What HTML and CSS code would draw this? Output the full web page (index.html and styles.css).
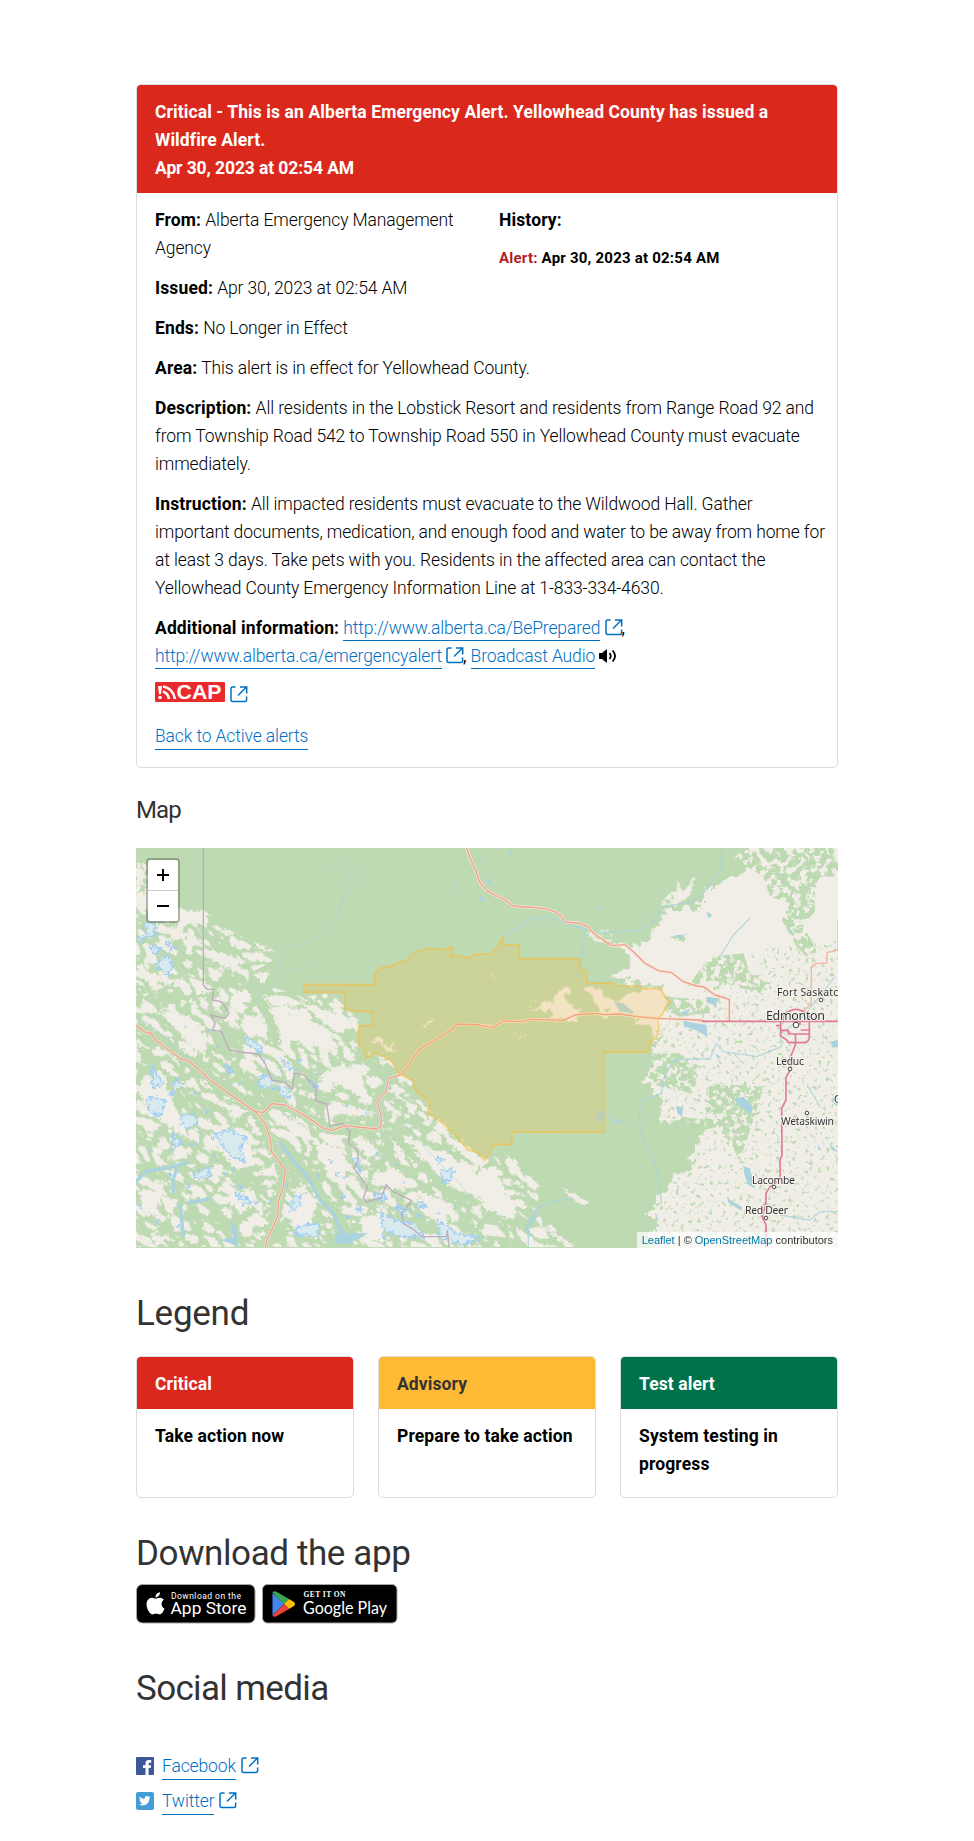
FILE: index.html
```html
<!DOCTYPE html>
<html lang="en">
<head>
<meta charset="utf-8">
<title>Alberta Emergency Alert</title>
<link rel="stylesheet" href="styles.css">
</head>
<body>
<svg width="0" height="0" class="defs" aria-hidden="true">
  <symbol id="ext" viewBox="0 0 18 17"><g fill="none" stroke="#0070c4" stroke-width="1.5"><path d="M5.5 1H2.6Q1 1 1 2.6V14Q1 15.5 2.6 15.5H15Q16.6 15.5 16.6 14V10.5"/><path d="M8 9.5 16 1.5M10 1H16.7V7.5"/></g></symbol>
</svg>
<main class="page">
  <section class="card alert">
    <h2 class="card-head critical head-text">Critical - This is an Alberta Emergency Alert. Yellowhead County has issued a<br>Wildfire Alert.<br><span class="stamp">Apr 30, 2023 at 02:54 AM</span></h2>
    <div class="card-body">
      <div class="split">
        <div>
          <p><b>From:</b> Alberta Emergency Management<br>Agency</p>
          <p><b>Issued:</b> Apr 30, 2023 at 02:54 AM</p>
          <p><b>Ends:</b> No Longer in Effect</p>
        </div>
        <div class="history">
          <b>History:</b>
          <div class="history-item"><span>Alert:</span> Apr 30, 2023 at 02:54 AM</div>
        </div>
      </div>
      <p><b>Area:</b> This alert is in effect for Yellowhead County.</p>
      <p><b>Description:</b> All residents in the Lobstick Resort and residents from Range Road 92 and<br>from Township Road 542 to Township Road 550 in Yellowhead County must evacuate<br>immediately.</p>
      <p><b>Instruction:</b> All impacted residents must evacuate to the Wildwood Hall. Gather<br>important documents, medication, and enough food and water to be away from home for<br>at least 3 days. Take pets with you. Residents in the affected area can contact the<br>Yellowhead County Emergency Information Line at 1-833-334-4630.</p>
      <p><b>Additional information:</b> <a href="#">http://www.alberta.ca/BePrepared</a> <svg class="ext"><use href="#ext"/></svg><span class="comma">,</span><br><a href="#">http://www.alberta.ca/emergencyalert</a> <svg class="ext"><use href="#ext"/></svg><span class="comma">,</span> <a href="#">Broadcast Audio</a> <svg class="sound" viewBox="0 0 18 14"><path d="M0 4H3L8 0V14L3 10H0Z"/><path d="M10.5 4Q13 7 10.5 10M13.6 1.5Q18.6 7 13.6 12.5" fill="none" stroke="#000" stroke-width="1.8"/></svg></p>
      <div class="cap-row">
        <svg class="cap" viewBox="0 0 70 20"><rect width="70" height="20" rx="1" fill="#eb2a2e"/><path d="M3 4H7L6 12H4Z" fill="#fff"/><circle cx="5" cy="15.5" r="1.8" fill="#fff"/><path d="M8 4.5Q18 6 20 17M8 9.5Q13 11 14 17" stroke="#fff" stroke-width="2.6" fill="none"/><text x="21.5" y="17" textLength="45" lengthAdjust="spacingAndGlyphs">CAP</text></svg>
        <svg class="ext"><use href="#ext"/></svg>
      </div>
      <a href="#" class="back">Back to Active alerts</a>
    </div>
  </section>

  <h3 class="map-title">Map</h3>
  <section class="map">
    <svg class="tiles" viewBox="0 0 702 400" width="702" height="400">
      <defs>
        <filter id="rough" x="-10%" y="-10%" width="120%" height="120%"><feTurbulence type="fractalNoise" baseFrequency=".035" numOctaves="4" seed="4"/><feDisplacementMap in="SourceGraphic" scale="62" xChannelSelector="R" yChannelSelector="G"/></filter>
        <filter id="wobble" x="-10%" y="-10%" width="120%" height="120%"><feTurbulence type="fractalNoise" baseFrequency=".09" numOctaves="3" seed="9"/><feDisplacementMap in="SourceGraphic" scale="26" xChannelSelector="R" yChannelSelector="G"/></filter>
        <filter id="ridges" x="0" y="0" width="100%" height="100%" color-interpolation-filters="sRGB"><feTurbulence type="turbulence" baseFrequency=".017 .028" numOctaves="5" seed="12"/><feColorMatrix values="0 0 0 0 .945  0 0 0 0 .933  0 0 0 0 .906  20 0 0 0 -6.6"/><feComposite in2="SourceGraphic" operator="in"/></filter>
        <filter id="groves" x="0" y="0" width="100%" height="100%" color-interpolation-filters="sRGB"><feTurbulence type="fractalNoise" baseFrequency=".08" numOctaves="4" seed="21"/><feColorMatrix values="0 0 0 0 .745  0 0 0 0 .855  0 0 0 0 .70  8 0 0 0 -4.8"/><feComposite in2="SourceGraphic" operator="in"/></filter>
        <filter id="dense" x="0" y="0" width="100%" height="100%" color-interpolation-filters="sRGB"><feTurbulence type="fractalNoise" baseFrequency=".05" numOctaves="5" seed="5"/><feColorMatrix values="0 0 0 0 .745  0 0 0 0 .855  0 0 0 0 .70  14 0 0 0 -6"/><feComposite in2="SourceGraphic" operator="in"/></filter>
        <clipPath id="rockies"><path d="M18 60 50 75 60 170 140 200 215 205 300 270 370 310 460 345 360 400 350 440 420 440 520 470 600 460 690 540 690 620 760 640 860 740 900 790 1060 950 1150 950 1230 1040 1220 1110 1330 1222H18Z"/></clipPath>
      </defs>
      <rect width="702" height="400" fill="#bedab2"/>
      <g transform="translate(-6 -8) scale(.33333)">
        <g clip-path="url(#rockies)"><g transform="rotate(36)"><rect x="0" y="-820" width="1850" height="1850" filter="url(#ridges)"/></g></g>
        <g fill="#f1eee7" filter="url(#wobble)">
          <path d="M20 70 45 90 30 150 50 190 18 210ZM170 215 215 210 240 250 190 250ZM110 260 190 290 130 300ZM260 260 300 285 270 280ZM370 305 460 345 380 325ZM230 325 360 365 290 385 230 350ZM30 390 200 440 90 430ZM370 400 420 395 400 430ZM310 450 350 460 330 510 300 500ZM400 465 470 470 480 500 420 490ZM440 520 520 530 600 570 620 640 540 610 440 600ZM500 480 640 530 700 550 620 580ZM320 560 400 525 415 600 380 590ZM85 510 180 530 240 600 200 640 130 560ZM640 670 700 720 720 790 640 740 560 720 600 690ZM690 830 740 820 600 780 620 820ZM20 740 80 700 130 790 180 900 120 860 60 820ZM240 850 350 880 370 960 320 990 260 920ZM780 870 900 920 1040 1000 1080 1090 960 1040 860 930ZM700 890 750 940 710 960ZM430 810 530 860 560 910 480 880ZM560 900 640 930 650 1060 590 1000ZM770 730 900 820 860 790ZM900 840 1020 930 1080 1010 960 910ZM30 1050 100 1050 80 1120 40 1130ZM740 1010 800 980 850 1040 780 1050ZM860 1050 960 1090 950 1160 880 1120ZM500 1040 560 1080 540 1180 480 1140ZM280 1020 380 1100 300 1090ZM690 1130 760 1120 760 1200 700 1200ZM60 1180 120 1190 80 1220Z"/>
          <path transform="translate(1050 0)" d="M0 980 50 1000 80 1060 110 1100 100 1140 20 1110-10 1040ZM70 930 140 1020 130 1030ZM240 1040 330 1090 300 1095ZM170 1145 280 1215 260 1218Z"/>
        </g>
        <g fill="none" stroke="#bedab2" stroke-linejoin="round" filter="url(#wobble)">
          <path stroke-width="36" d="M18 555 80 590 170 660 260 730 380 810 420 900 465 1000 440 1120 405 1222"/>
          <path stroke-width="26" d="M380 815 440 790 530 830 610 870 740 865 755 800 740 780 800 700M450 340 440 400 380 470 430 560 440 620M460 910 540 1010 620 1130 660 1222M780 870 880 980 950 1050 1030 1080M760 870 790 970 860 1010M700 540 690 640 770 720"/>
          <path stroke-width="16" d="M18 440 120 480 270 460M20 620 180 770 300 820M230 640 340 710 440 790M20 1000 110 980 250 1000M150 1090 240 1080 300 1160M820 730 960 850 1050 940"/>
        </g>
        <g fill="#d9eaee" stroke="#9fcdf4" stroke-width="5" filter="url(#wobble)">
          <path d="M45 250 75 250 75 285 50 290ZM22 290 45 288 40 305ZM60 320 95 325 75 345ZM110 310 135 320 120 328ZM80 375 110 345 130 380 110 405ZM345 590 395 620 390 640 350 610ZM455 660 500 690 465 685ZM390 710 425 710 430 745 385 740ZM445 735 475 745 475 775 450 760ZM50 770 105 780 95 825 60 820ZM65 680 100 730 70 745ZM140 720 155 740 120 765ZM150 830 190 820 205 850 165 870ZM255 880 290 870 350 890 330 930 345 965 300 950ZM190 1000 240 980 240 1015 200 1015ZM320 1060 365 1085 340 1095ZM130 880 155 910 130 920ZM490 1070 515 1065 510 1100 480 1115ZM500 1160 570 1150 560 1190 500 1185ZM535 715 560 740 540 735ZM665 950 690 960 690 995ZM750 1110 790 1140 850 1150 880 1190 810 1190 760 1165ZM920 1140 980 1180 1050 1190 1000 1215 930 1190ZM930 990 970 990 960 1020 940 1025ZM920 950 940 955 925 970ZM800 1100 835 1110 820 1130ZM685 1100 695 1115 680 1115ZM290 680 305 690 300 700ZM735 1060 760 1060 770 1080 730 1075ZM870 1080 890 1100 860 1100Z"/>
        </g>
        <g fill="none" stroke="#9fcdf4" stroke-width="8" stroke-dasharray="8 58" filter="url(#wobble)"><path d="M120 1000 180 1040 260 980 330 1040 400 1110 470 1030 530 1060 600 960 650 1020 720 940 790 960 840 1060 780 1090 900 1140 960 1090 1020 1140M190 760 240 820 180 900 240 940 340 1010M400 660 440 700 510 660 600 740 650 800 720 820M30 1100 100 1160 160 1160M620 1000 660 1140 690 1180 800 1200M160 560 240 570 300 690 340 740M50 930 130 930 260 890"/></g>
        <g fill="none" stroke="#aad3df" stroke-linecap="round" stroke-linejoin="round">
          <path stroke-width="10" d="M18 1025 50 993 120 983 170 968M130 1055 128 1020 140 990M150 1095 160 1185M175 1088 235 1077M450 908 500 975 530 1005 570 1080 610 1120 640 1190"/>
          <path stroke-width="2.5" opacity=".7" d="M630 60 660 75 655 120 620 240 540 310 490 315 455 345 448 400 430 440 385 465 390 510 415 550M660 75 690 100 660 150 640 155 630 230M450 400 530 380M18 525 80 570 160 650 240 715M820 850 900 940 980 1020 1030 1080M770 700 755 800 760 870"/>
          <path fill="#aad3df" stroke="none" d="M300 1145 320 1160 325 1222 300 1210 270 1200 310 1190ZM630 1160 650 1180 715 1180 655 1212 610 1210ZM593 85 600 82 600 100ZM962 120 982 148 975 148ZM1045 45 1055 60 1048 62ZM1050 165 1068 184 1050 180Z"/>
        </g>
        <g fill="none" stroke="#bcadbb" stroke-width="4" stroke-linejoin="round">
          <path d="M220 24V436L232 448H250L247 480 275 485 297 520 285 535 242 525 255 550 248 570 275 575 296 628 330 636 385 642 405 670 425 720 460 725 488 748 492 700 520 704 560 745 556 782 590 792 600 858 640 850 660 875 655 910 682 930 685 960 672 985 712 1040 700 1075 710 1086 755 1072 768 1034 790 1055 845 1082 815 1120 820 1150 850 1168 875 1190 950 1190 952 1172 958 1222"/>
        </g>
        <g fill="none" stroke-linejoin="round">
          <path stroke="#f6e5d8" stroke-width="8" d="M18 557 50 580 60 576 80 603 150 655 180 665 240 720 340 790 375 815 405 850 422 900 424 935 466 990 460 1040 445 1085 443 1130 410 1200 406 1222M375 815 400 817 425 791 465 795 530 830 575 862 605 872 645 857 740 867 752 860 754 830 741 785 768 755 775 715 815 703 868 628 965 570 980 552 1060 555 1085 559"/>
          <path class="hw-core" d="M18 557 50 580 60 576 80 603 150 655 180 665 240 720 340 790 375 815 405 850 422 900 424 935 466 990 460 1040 445 1085 443 1130 410 1200 406 1222M375 815 400 817 425 791 465 795 530 830 575 862 605 872 645 857 740 867 752 860 754 830 741 785 768 755 775 715 815 703 868 628 965 570 980 552 1060 555 1085 559"/>
        </g>
      </g>
      <g transform="translate(344 -8) scale(.33333)">
        <path filter="url(#rough)" fill="#f1eee7" d="M750 0 800 90 740 120 670 150 660 200 560 210 510 290 470 320 400 300 450 340 440 380 400 410 450 430 545 440 570 480 545 540 540 600 510 640 500 740 540 750 540 850 610 840 670 860 640 930 640 970 600 1000 570 1030 530 1090 500 1120 530 1150 510 1180 560 1270H1180V0Z"/>
        <path filter="url(#rough)" fill="#f1eee7" d="M540 190 600 140 650 120 640 160 590 190ZM320 280 400 290 390 310 340 300ZM130 500 220 480 260 440 265 480 300 520 290 550 250 530 160 500ZM320 440 350 430 370 470 430 480 440 460 490 450 550 450 560 500 530 600 510 560 440 525 360 520ZM35 400H50L45 415ZM115 590 140 595 120 600ZM-165 555-135 530-145 560ZM-290 600-250 640-340 600Z"/>
        <g filter="url(#dense)"><path d="M740 10 1074 10V110H1020L1005 150V230L960 240 1010 330 1000 370 950 320 905 240 930 190 870 170 850 110 770 60ZM690 350 790 340 810 400 860 430 840 460 700 420 620 440ZM560 470 680 480 690 520 600 530 550 510ZM570 290 625 280 610 310ZM490 640 600 640 660 680 640 760 540 740 490 700ZM690 730 850 740 830 810 780 960 720 860 670 870ZM600 830 690 840 650 920 590 900Z"/></g>
        <path filter="url(#groves)" d="M490 590 700 420 840 330 1074 300V1222H500L560 980 660 860 530 850 520 730Z"/>
        <g fill="#aad3df">
          <path d="M680 470 715 475 708 497 680 487ZM610 543 680 555 682 592 650 570 612 560ZM762 775 790 770 818 800 815 822 775 795ZM790 978 810 985 825 1045 805 1035 792 1000ZM742 1075 785 1100 785 1112 745 1088ZM588 797 610 805 605 830 592 820ZM1050 605 1074 600V622H1058ZM1052 780 1070 765V798ZM680 215 697 225 685 235ZM595 520 630 506 620 525ZM585 285 612 285 600 298ZM925 260 937 275 930 277ZM22 110 40 135 25 130ZM82 30 98 38 90 48ZM0 170 15 182 0 180ZM350 205 365 198 358 212ZM403 838 430 848 405 850ZM1013 912 1024 930 1015 930ZM1048 910 1074 935 1055 930ZM795 440 802 460 797 460ZM708 640 720 650 710 654ZM527 1120 535 1140 527 1138ZM1023 720 1040 738ZM885 385 897 390Z"/>
          <path d="M360 810 372 815 368 850 345 835ZM402 485 430 490 465 520 420 515Z" opacity=".9"/>
        </g>
        <g fill="none" stroke="#aad3df" stroke-width="4" opacity=".8" stroke-linejoin="round">
          <path d="M725 24 722 90 680 150 640 185 550 200 520 245 480 270 350 280M320 270 200 230 150 240 70 290M315 280 300 390M905 620 830 650 730 635 710 610 690 655 580 660 550 720 545 760 480 785 478 850 495 920 520 945 535 1020 545 1090M370 815 420 850M905 620 900 580 960 540 1010 480 1065 410M810 235 760 285 720 350M985 740 1020 800M165 1110 145 1150 145 1222M165 1110 210 1085 280 1075M1074 1115 1020 1115 990 1140 900 1125"/>
          <path stroke-width="9" d="M168 1110 160 1140 140 1160 148 1190"/>
        </g>
        <g fill="none" stroke-linejoin="round">
          <path stroke="#f6e5d8" stroke-width="9" d="M-40 24-28 58-10 100 0 128 20 152 75 180 100 198 190 205 225 215 245 230 255 246 300 250 325 260 340 280 395 317 435 314 465 340 495 370 535 392 575 398 610 425 650 438 670 440 705 465 748 478V544M0 556 38 562 70 543 130 545 150 538 250 541 285 525 340 520 375 524 420 522 470 530 530 535 660 540 675 544"/>
          <path class="hw-core" d="M-40 24-28 58-10 100 0 128 20 152 75 180 100 198 190 205 225 215 245 230 255 246 300 250 325 260 340 280 395 317 435 314 465 340 495 370 535 392 575 398 610 425 650 438 670 440 705 465 748 478V544M0 556 38 562 70 543 130 545 150 538 250 541 285 525 340 520 375 524 420 522 470 530 530 535 660 540 675 544"/>
          <path stroke="#f7b5a4" stroke-width="4" d="M950 530 994 492V380L1010 370H1040L1041 338 1074 330M1074 240V330M990 544H1074"/>
          <path stroke="#e47b96" stroke-width="5" d="M665 544H1074M902 544V588L920 600 925 608H975Q988 604 988 590V530Q970 508 948 508 925 508 910 530V544M902 571H925V582H988M888 557H902M962 570H988M960 544V555M946 582 947 612 930 655 932 687 918 712V780L905 805 906 945 900 960 901 1020 870 1040 858 1060 857 1095 846 1130 858 1155 859 1222"/>
        </g>
      </g>
      <g transform="translate(-6 -8) scale(.33333)">
        <path d="M522 434H733V404L750 384 790 376 808 366 830 364 852 336 900 324 940 330 962 320 970 328 962 350 975 345 1020 355 1033 342H1082L1100 323 1105 310 1120 290 1122 314 1168 315V356H1347L1354 366 1346 375 1355 390 1371 395V428L1452 430V438L1530 438 1535 446 1590 446 1600 458 1604 470 1620 487 1605 503 1597 526 1584 533 1586 577 1578 595 1562 603 1555 637H1421L1422 877 1146 876V914H1088L1085 927 1064 962 1045 938 1012 930 985 895 940 850 890 818 902 790 855 750 850 722 808 702 785 665 742 637 708 655 703 632 686 612V557H726V515H686L645 508V457H522Z" fill="#ffb933" fill-opacity=".2" stroke="#fdb933" stroke-opacity=".55" stroke-width="5" stroke-linejoin="round"/>
      </g>
      <g class="places">
        <text x="641" y="148" textLength="74">Fort Saskatche</text>
        <text x="630" y="172" class="city" textLength="59">Edmonton</text>
        <text x="640" y="217" textLength="28">Leduc</text>
        <text x="698" y="255">Camrose</text>
        <text x="645" y="276.5" textLength="53">Wetaskiwin</text>
        <text x="616" y="335.5" textLength="43">Lacombe</text>
        <text x="609" y="366" textLength="43">Red Deer</text>
        <g class="dots"><circle cx="685" cy="152" r="1.8"/><circle cx="660" cy="177" r="2.8"/><circle cx="654" cy="221" r="1.8"/><circle cx="671" cy="265" r="1.8"/><circle cx="638" cy="339" r="1.8"/><circle cx="630" cy="370" r="1.8"/></g>
      </g>
    </svg>
    <div class="zoom"><span><svg viewBox="0 0 12 12"><path d="M0 6H12M6 0V12"/></svg></span><span><svg viewBox="0 0 12 12"><path d="M0 6H12"/></svg></span></div>
    <div class="credit"><span>Leaflet</span> | © <span>OpenStreetMap</span> contributors</div>
  </section>

  <h2 class="title legend-title">Legend</h2>
  <section class="legend">
    <div class="card"><h3 class="card-head critical">Critical</h3><div class="card-body"><b>Take action now</b></div></div>
    <div class="card"><h3 class="card-head advisory">Advisory</h3><div class="card-body"><b>Prepare to take action</b></div></div>
    <div class="card"><h3 class="card-head test">Test alert</h3><div class="card-body"><b>System testing in<br>progress</b></div></div>
  </section>

  <h2 class="title app-title">Download the app</h2>
  <div class="badges">
    <svg width="120" height="40" viewBox="0 0 120 40"><rect x=".5" y=".5" width="118.5" height="38.5" rx="6" stroke="#a6a6a6"/><path transform="translate(8.5 8.3) scale(.92)" fill="#fff" d="M12.152 6.896c-.948 0-2.415-1.078-3.96-1.04-2.04.027-3.91 1.183-4.961 3.014-2.117 3.675-.546 9.103 1.519 12.09 1.013 1.454 2.208 3.09 3.792 3.039 1.52-.065 2.09-.987 3.935-.987 1.831 0 2.35.987 3.96.948 1.637-.026 2.676-1.48 3.676-2.948 1.156-1.688 1.636-3.325 1.662-3.415-.039-.013-3.182-1.221-3.22-4.857-.026-3.04 2.48-4.494 2.597-4.559-1.429-2.09-3.623-2.324-4.39-2.376-2-.156-3.675 1.09-4.61 1.09zM15.53 3.83c.843-1.012 1.4-2.427 1.245-3.83-1.207.052-2.662.805-3.532 1.818-.78.896-1.454 2.338-1.273 3.714 1.338.104 2.715-.688 3.559-1.701"/><text x="35" y="14.5" class="small" textLength="70">Download on the</text><text x="34.5" y="30" class="store" textLength="76" lengthAdjust="spacingAndGlyphs">App Store</text></svg>
    <svg width="136" height="40" viewBox="0 0 136 40"><rect x=".5" y=".5" width="134.5" height="38.5" rx="5" stroke="#a6a6a6"/><path fill="#4285f4" d="M10.5 9V31.5L22 20Z"/><path fill="#34a853" d="M10.5 8.5Q11.5 6.5 14 7.5L27 15 22 20.5Z"/><path fill="#fbbc04" d="M27 15 32 18Q34 20 32 22L27 25 22 20Z"/><path fill="#ea4335" d="M22 20 27 25 14 32.5Q11.5 33.5 10.5 31.5Z"/><text x="41.5" y="13" class="get" textLength="42">GET IT ON</text><text x="41" y="30" class="play" textLength="84" lengthAdjust="spacingAndGlyphs">Google Play</text></svg>
  </div>

  <h2 class="title social-title">Social media</h2>
  <ul class="social">
    <li><svg class="logo" viewBox="0 0 18 18"><rect width="18" height="18" rx="1" fill="#3b5998"/><path fill="#fff" d="M9.5 18V11H7V8.2H9.5V6.3Q9.5 3 12.8 3H15.2V5.8H13.7Q12.6 5.8 12.6 7V8.2H15.1L14.7 11H12.6V18Z"/></svg><a href="#">Facebook</a><svg class="ext"><use href="#ext"/></svg></li>
    <li><svg class="logo" viewBox="0 0 18 18"><rect width="18" height="18" rx="2" fill="#429cd6"/><path transform="translate(3 3) scale(.48)" fill="#fff" d="M23.953 4.57a10 10 0 01-2.825.775 4.958 4.958 0 002.163-2.723c-.951.555-2.005.959-3.127 1.184a4.92 4.92 0 00-8.384 4.482C7.69 8.095 4.067 6.13 1.64 3.162a4.822 4.822 0 00-.666 2.475c0 1.71.87 3.213 2.188 4.096a4.904 4.904 0 01-2.228-.616v.06a4.923 4.923 0 003.946 4.827 4.996 4.996 0 01-2.212.085 4.936 4.936 0 004.604 3.417 9.867 9.867 0 01-6.102 2.105c-.39 0-.779-.023-1.17-.067a13.995 13.995 0 007.557 2.209c9.053 0 13.998-7.496 13.998-13.985 0-.21 0-.42-.015-.63A9.935 9.935 0 0024 4.59z"/></svg><a href="#">Twitter</a><svg class="ext"><use href="#ext"/></svg></li>
  </ul>
</main>
</body>
</html>
```

FILE: styles.css
```css
* { box-sizing: border-box; }
body { margin: 0; background: #fff; color: #000; font: 300 17.5px/28px Roboto, "Liberation Sans", sans-serif; letter-spacing: -.12px; }
.defs { display: block; }
.page { width: 702px; margin: 0 136px; padding-top: 84px; height: 1841px; overflow: hidden; white-space: nowrap; }
h2, h3, p, ul { margin: 0; padding: 0; }
h2, h3 { font-weight: 400; }
b { font-weight: 700; letter-spacing: .12px; }
a { color: #0070c4; text-decoration: none; border-bottom: 1px solid #0070c4; padding-bottom: 2px; }
.card { border: 1px solid #dcdcdc; border-radius: 5px; overflow: hidden; }
.alert { height: 684px; }
.card-head { padding: 13px 18px 11px; font-size: 17.5px; font-weight: 700; line-height: 28px; letter-spacing: .09px; }
.stamp { letter-spacing: -.1px; }
.critical { background: #da291c; color: #fff; }
.advisory { background: #feba35; color: #333; }
.test { background: #00724a; color: #fff; }
.card-body { padding: 13px 18px; }
.card-body p { margin-bottom: 12px; }
.split { display: grid; grid-template-columns: 344px 1fr; }
.history-item { margin-top: 10px; font-size: 15px; font-weight: 700; letter-spacing: .22px; }
.history-item span { color: #b01e24; }
.ext { width: 18px; height: 17px; vertical-align: -2px; }
.comma { margin-left: -1px; font-weight: 400; }
.sound { width: 18px; height: 14px; vertical-align: -1px; }
.cap-row { display: flex; gap: 5px; height: 28px; align-items: flex-start; }
.cap { width: 70px; height: 20px; }
.cap text { font: 700 19.5px "Liberation Sans", sans-serif; fill: #fff; letter-spacing: 0; }
.cap-row .ext { margin-top: 4px; }
.back { display: inline-block; line-height: 22px; margin-top: 15px; }
.map-title { font-size: 24px; line-height: 32px; color: #333; margin: 26px 0 22px; letter-spacing: -.9px; }
.map { position: relative; width: 702px; height: 400px; overflow: hidden; letter-spacing: 0; font-weight: 400; }
.tiles { display: block; }
.hw-core { stroke: #f0a08a; stroke-width: 4px; }
.places text { font: 10.5px "Noto Sans", sans-serif; fill: #333; stroke: #f6f3ee; stroke-width: 2px; paint-order: stroke; }
.places .city { font-size: 12.5px; }
.dots { fill: #fff; stroke: #444; stroke-width: 1px; }
.zoom { position: absolute; left: 10px; top: 10px; width: 34px; height: 65px; border: 2px solid rgba(0,0,0,.25); border-radius: 4px; background: #fff; background-clip: padding-box; }
.zoom span { display: flex; align-items: center; justify-content: center; height: 30px; }
.zoom span:first-child { height: 31px; border-bottom: 1px solid #ccc; }
.zoom svg { width: 12px; height: 12px; fill: none; stroke: #000; stroke-width: 2px; }
.credit { position: absolute; right: 0; bottom: 0; height: 16px; padding: 0 5px; background: rgba(255,255,255,.7); color: #333; font: 11px/16px "Liberation Sans", sans-serif; }
.credit span { color: #0078a8; }
.title { font-size: 35px; line-height: 44px; color: #333; letter-spacing: -.4px; }
.legend-title { margin: 44px 0 20px; letter-spacing: -.25px; }
.legend { display: grid; grid-template-columns: repeat(3, 218px); gap: 24px; }
.legend .card { height: 142px; }
.legend .card-head { padding: 13px 18px 11px; }
.app-title { margin: 34px 0 8px; }
.badges { display: flex; gap: 6px; height: 40px; letter-spacing: 0; }
.badges text { fill: #fff; font-family: Lato, sans-serif; }
.badges .small { font: 8.5px Roboto, sans-serif; }
.badges .store { font: 17px Roboto, sans-serif; }
.badges .get { font: 700 7.5px "Liberation Serif", serif; }
.badges .play { font: 18px Lato, sans-serif; }
.social-title { margin: 43px 0 39px; letter-spacing: -.65px; }
.social { list-style: none; }
.social li { display: flex; align-items: center; height: 35px; }
.social .logo { width: 18px; height: 18px; margin: -4px 8px 0 0; }
.social a { line-height: 22px; }
.social .ext { margin: -4px 0 0 5px; }
```
